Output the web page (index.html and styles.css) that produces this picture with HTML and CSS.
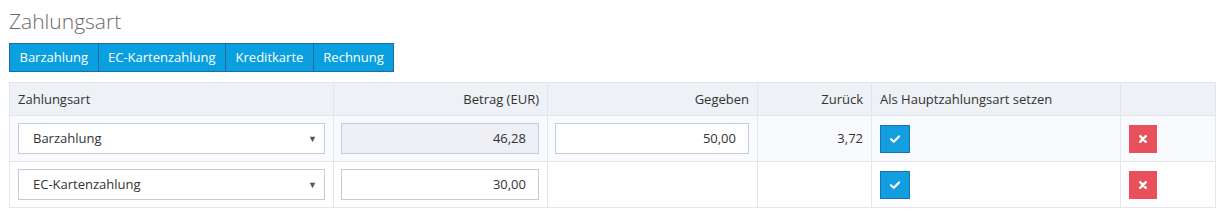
FILE: index.html
```html
<!DOCTYPE html>
<html lang="de">
<head>
<meta charset="utf-8">
<title>Zahlungsart</title>
<link rel="stylesheet" href="styles.css">
</head>
<body>
<div class="page">
  <h1 class="title">Zahlungsart</h1>
  <div class="btn-group">
    <button class="btn-blue">Barzahlung</button>
    <button class="btn-blue">EC-Kartenzahlung</button>
    <button class="btn-blue">Kreditkarte</button>
    <button class="btn-blue">Rechnung</button>
  </div>
  <table class="pay-table">
    <colgroup>
      <col class="c1"><col class="c2"><col class="c3"><col class="c4"><col class="c5"><col class="c6">
    </colgroup>
    <thead>
      <tr>
        <th class="left">Zahlungsart</th>
        <th class="right">Betrag (EUR)</th>
        <th class="right">Gegeben</th>
        <th class="right">Zurück</th>
        <th class="left">Als Hauptzahlungsart setzen</th>
        <th></th>
      </tr>
    </thead>
    <tbody>
      <tr class="odd">
        <td><div class="select"><span>Barzahlung</span><span class="arrow">▼</span></div></td>
        <td><div class="input disabled">46,28</div></td>
        <td><div class="input">50,00</div></td>
        <td class="right">3,72</td>
        <td><button class="icon-btn check"><svg width="10" height="8" viewBox="0 0 10 8"><path d="M1 4.2 L3.8 6.8 L9 1.4" fill="none" stroke="#fff" stroke-width="2.2" stroke-linejoin="round" stroke-linecap="round"/></svg></button></td>
        <td><button class="icon-btn del"><svg width="8" height="8" viewBox="0 0 8 8"><path d="M1.2 1.2 L6.8 6.8 M6.8 1.2 L1.2 6.8" fill="none" stroke="#fff" stroke-width="2.4" stroke-linecap="round"/></svg></button></td>
      </tr>
      <tr>
        <td><div class="select"><span>EC-Kartenzahlung</span><span class="arrow">▼</span></div></td>
        <td><div class="input">30,00</div></td>
        <td></td>
        <td></td>
        <td><button class="icon-btn check"><svg width="10" height="8" viewBox="0 0 10 8"><path d="M1 4.2 L3.8 6.8 L9 1.4" fill="none" stroke="#fff" stroke-width="2.2" stroke-linejoin="round" stroke-linecap="round"/></svg></button></td>
        <td><button class="icon-btn del"><svg width="8" height="8" viewBox="0 0 8 8"><path d="M1.2 1.2 L6.8 6.8 M6.8 1.2 L1.2 6.8" fill="none" stroke="#fff" stroke-width="2.4" stroke-linecap="round"/></svg></button></td>
      </tr>
    </tbody>
  </table>
</div>
</body>
</html>
```

FILE: styles.css
```css
html, body {
  margin: 0;
  padding: 0;
  background: #fff;
}
body {
  font-family: "Open Sans", "Liberation Sans", sans-serif;
  font-size: 13px;
  color: #333;
}
.page {
  padding: 9px 4px 0 9px;
}
.title {
  margin: 0;
  font-size: 21px;
  font-weight: 300;
  line-height: 24px;
  color: #6a6a6a;
}
.btn-group {
  display: flex;
  margin-top: 10px;
}
.btn-blue {
  height: 29px;
  padding: 0 9.5px;
  margin: 0 -1px 0 0;
  border: 1px solid #1f6aa5;
  background: #0aa0e0;
  color: #fff;
  font-family: inherit;
  font-size: 13px;
  line-height: 27px;
}
.pay-table {
  margin-top: 10px;
  width: 1206px;
  border-collapse: collapse;
  table-layout: fixed;
}
.c1 { width: 324px; }
.c2 { width: 214px; }
.c3 { width: 210px; }
.c4 { width: 114px; }
.c5 { width: 249px; }
.c6 { width: 95px; }
.pay-table th,
.pay-table td {
  border: 1px solid #e3e7ec;
  vertical-align: middle;
}
.pay-table th {
  background: #eef1f5;
  font-weight: 400;
  padding: 8px 8px;
  line-height: 16px;
  height: 16px;
  color: #333;
}
.pay-table td {
  padding: 7px 8px 7px 7px;
  height: 31px;
  line-height: 17px;
}
.pay-table tr.odd td {
  background: #f9fafd;
}
.left { text-align: left; }
.right { text-align: right; }
.pay-table td.right { padding-right: 8px; }
.select {
  display: flex;
  justify-content: space-between;
  align-items: center;
  box-sizing: border-box;
  height: 31px;
  margin-left: 1px;
  padding: 0 7px 0 14px;
  border: 1px solid #c6cbd9;
  background: #fff;
}
.arrow {
  font-size: 9px;
  color: #555;
}
.input {
  box-sizing: border-box;
  height: 31px;
  padding: 0 12px;
  border: 1px solid #c6cbd9;
  background: #fff;
  text-align: right;
  line-height: 29px;
}
.input.disabled {
  background: #eef0f5;
}
.icon-btn {
  display: flex;
  align-items: center;
  justify-content: center;
  box-sizing: border-box;
  height: 28px;
  padding: 0;
  margin-left: 1px;
}
.check {
  width: 30px;
  background: #139ee0;
  border: 1px solid #1a73b0;
}
.del {
  width: 28px;
  background: #e8505b;
  border: 1px solid #e8505b;
}
```
